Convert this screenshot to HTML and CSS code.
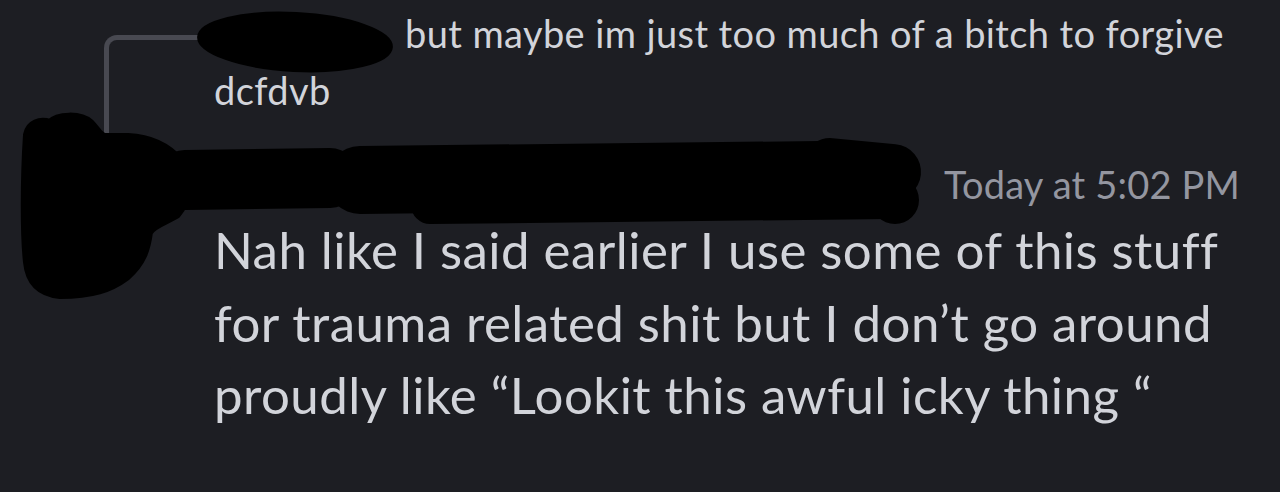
FILE: index.html
```html
<!DOCTYPE html>
<html lang="en">
<head>
<meta charset="utf-8">
<title>Message</title>
<link rel="stylesheet" href="styles.css">
</head>
<body>
<div class="msg">
  <div class="spine-cell"><div class="spine"></div></div>
  <div class="reply"><span class="reply-name"></span>but maybe im just too much of a bitch to forgive dcfdvb</div>

  <div class="avatar-cell"><div class="avatar"></div></div>
  <div class="header"><span class="name"></span><span class="time">Today at 5:02 PM</span></div>
  <div class="content">Nah like I said earlier I use some of this stuff for trauma related shit but I don’t go around proudly like “Lookit this awful icky thing “</div>

  <svg class="redact" width="1280" height="492" viewBox="0 0 1280 492" aria-hidden="true">
    <g fill="#000" stroke="#000" stroke-linejoin="round" stroke-linecap="round">
      <ellipse cx="295" cy="42" rx="97" ry="29" transform="rotate(3 295 42)" stroke-width="2"/>
      <path stroke-width="10" d="M28 135 C30 124 40 121 50 124 C58 116 80 115 90 124 C96 130 98 136 104 138 L128 138 C150 139 168 148 180 162 C190 178 188 200 176 214 C162 222 152 224 148 232 C146 248 142 262 126 276 C110 288 92 294 60 294 C40 292 30 282 28 262 C25 235 25 180 28 135 Z"/>
      <line x1="185" y1="180" x2="330" y2="178" stroke-width="60"/>
      <line x1="360" y1="180" x2="820" y2="175" stroke-width="68"/>
      <line x1="430" y1="205" x2="890" y2="200" stroke-width="38"/>
      <line x1="830" y1="166" x2="893" y2="172" stroke-width="56"/>
      <line x1="880" y1="185" x2="895" y2="200" stroke-width="48"/>
    </g>
  </svg>
</div>
</body>
</html>
```

FILE: styles.css
```css
html, body {
  margin: 0;
  padding: 0;
  background: #1d1e23;
}

body {
  width: 1280px;
  height: 492px;
  overflow: hidden;
  font-family: Lato, "Noto Sans", sans-serif;
  color: #d2d4da;
}

.msg {
  position: relative;
  display: grid;
  grid-template-columns: 214px 1fr;
  grid-template-rows: 114px auto auto;
  padding-top: 5px;
}

.spine-cell {
  grid-column: 1;
  grid-row: 1;
  display: flex;
}

.spine {
  margin: 30px 0 -20px 104px;
  width: 110px;
  border-left: 5px solid #484951;
  border-top: 5px solid #484951;
  border-top-left-radius: 13px;
}

.reply {
  grid-column: 2;
  grid-row: 1;
  font-size: 38px;
  letter-spacing: 0.4px;
  line-height: 57px;
  color: #d2d4da;
}

.reply-name {
  display: inline-block;
  width: 191px;
}

.avatar-cell {
  grid-column: 1;
  grid-row: 2 / span 2;
}

.header {
  grid-column: 2;
  grid-row: 2;
  margin-top: 43px;
  display: flex;
  align-items: center;
  height: 44px;
}

.name {
  width: 730px;
}

.time {
  font-size: 38px;
  letter-spacing: 0.2px;
  line-height: 44px;
  color: #9496a0;
}

.content {
  grid-column: 2;
  grid-row: 3;
  margin-top: 8px;
  width: 1040px;
  font-size: 51px;
  letter-spacing: 0.45px;
  line-height: 72.5px;
}

.redact {
  position: absolute;
  left: 0;
  top: 0;
  pointer-events: none;
}
```
